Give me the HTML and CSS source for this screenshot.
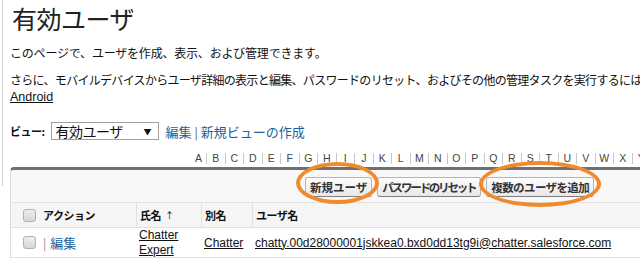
FILE: index.html
```html
<!DOCTYPE html>
<html lang="ja">
<head>
<meta charset="utf-8">
<link rel="stylesheet" href="styles.css">
</head>
<body>
<div class="page">
  <h1 class="title">有効ユーザ</h1>
  <p class="intro">このページで、ユーザを作成、表示、および管理できます。</p>
  <p class="intro2"><span class="clip">さらに、モバイルデバイスからユーザ詳細の表示と編集、パスワードのリセット、およびその他の管理タスクを実行するには</span><a class="plain" href="#">Android</a></p>
  <div class="view-row">
    <span class="view-label">ビュー:</span>
    <span class="select"><span class="sel-text">有効ユーザ</span><span class="sel-arrow">▼</span></span>
    <a class="link" href="#">編集</a><span class="bar">|</span><a class="link" href="#">新規ビューの作成</a>
  </div>
  <div class="alpha">
    <span>A</span><span>B</span><span>C</span><span>D</span><span>E</span><span>F</span><span>G</span><span>H</span><span>I</span><span>J</span><span>K</span><span>L</span><span>M</span><span>N</span><span>O</span><span>P</span><span>Q</span><span>R</span><span>S</span><span>T</span><span>U</span><span>V</span><span>W</span><span>X</span><span>Y</span>
  </div>
  <div class="panel">
    <div class="btn-row">
      <span class="btn-wrap">
        <button class="btn">新規ユーザ</button>
        <span class="ring ring1"></span>
      </span>
      <button class="btn narrow">パスワードのリセット</button>
      <span class="btn-wrap">
        <button class="btn mid">複数のユーザを追加</button>
        <span class="ring ring2"></span>
      </span>
    </div>
    <div class="row head">
      <div class="c c1"><span class="cb"></span>アクション</div>
      <div class="c c2">氏名 <span class="sort">↑</span></div>
      <div class="c c3">別名</div>
      <div class="c c4">ユーザ名</div>
    </div>
    <div class="row data">
      <div class="c c1"><span class="cb"></span><span class="sep">|</span><a class="link edit" href="#">編集</a></div>
      <div class="c c2"><a class="plain two" href="#">Chatter<br>Expert</a></div>
      <div class="c c3"><a class="plain" href="#">Chatter</a></div>
      <div class="c c4"><a class="plain" href="#">chatty.00d28000001jskkea0.bxd0dd13tg9i@chatter.salesforce.com</a></div>
    </div>
  </div>
</div>
</body>
</html>
```
FILE: styles.css
```css
html, body {
  margin: 0;
  padding: 0;
  background: #fff;
  overflow: hidden;
}
body {
  width: 640px;
  height: 263px;
  font-family: "Noto Sans CJK JP", "Liberation Sans", sans-serif;
  color: #111;
  font-size: 12px;
  position: relative;
}
body::before {
  content: "";
  position: absolute;
  left: 2px;
  top: 0;
  width: 1px;
  height: 186px;
  background: #d4d4d4;
}
.page {
  padding-left: 10px;
  white-space: nowrap;
}
.title {
  margin: 0;
  padding-top: 2px;
  font-size: 25px;
  font-weight: normal;
  line-height: 32px;
  color: #222;
  padding-left: 2px;
  letter-spacing: -0.5px;
}
.intro {
  margin: 11px 0 0;
  line-height: 16px;
  letter-spacing: -0.2px;
}
.intro2 {
  margin: 11px 0 0;
  line-height: 16px;
  letter-spacing: -0.7px;
}
.clip {
  display: block;
}
.plain {
  color: #111;
  text-decoration: underline;
  font-family: "Liberation Sans", sans-serif;
  letter-spacing: 0;
}
.intro2 .plain { font-size: 12.5px; }
.view-row {
  margin-top: 17px;
  display: flex;
  align-items: center;
  height: 18px;
}
.view-label {
  font-weight: bold;
  font-size: 11px;
  letter-spacing: -0.5px;
  margin-right: 6px;
}
.select {
  display: inline-flex;
  align-items: center;
  justify-content: space-between;
  height: 16px;
  border: 1px solid #a0a0a0;
  padding: 0 6px 0 4px;
  width: 96px;
  font-size: 14px;
  margin-right: 7px;
}
.sel-text { letter-spacing: -0.5px; line-height: 16px; }
.sel-arrow { font-size: 8px; }
.link {
  color: #1a5f9e;
  text-decoration: none;
  font-size: 13px;
}
.bar {
  color: #555;
  margin: 0 3px;
  font-size: 12px;
}
.alpha {
  margin-top: 11px;
  padding-left: 185px;
  display: flex;
  height: 14px;
  align-items: center;
  font-size: 10.5px;
  color: #444;
  font-family: "Liberation Sans", sans-serif;
}
.alpha span {
  width: 17.5px;
  text-align: center;
  border-right: 1px solid #c8c8c8;
  line-height: 11px;
  flex: none;
}
.alpha span:first-child { width: 11px; text-align: left; }
.alpha span:last-child { border-right: none; }
.panel {
  margin-top: 2px;
  border-top: 3px solid #6f6f6f;
  border-left: 1px solid #dcdcdc;
  border-radius: 4px 0 0 0;
  background: #f8f8f8;
  width: 650px;
}
.btn-row {
  display: flex;
  padding: 7px 0 5px 294px;
  gap: 5px;
}
.btn-wrap {
  position: relative;
  display: inline-flex;
}
.btn {
  font-family: "Noto Sans CJK JP", sans-serif;
  font-weight: bold;
  font-size: 11.5px;
  letter-spacing: 0;
  color: #333;
  height: 20px;
  padding: 0 4px;
  border: 1px solid #b5b5b5;
  border-bottom-color: #7f7f7f;
  border-radius: 3px;
  background: linear-gradient(#fdfdfd, #e8e8e8);
  line-height: 18px;
}
.btn.narrow { letter-spacing: -2.2px; padding: 0 5px 0 4px; }
.btn.mid { letter-spacing: -0.6px; }
.ring {
  position: absolute;
  box-sizing: border-box;
  border: 4px solid #f08a2c;
  border-radius: 50%;
  pointer-events: none;
}
.ring1 {
  left: -9px;
  top: -15px;
  width: 83px;
  height: 42px;
}
.ring2 {
  left: -7px;
  top: -16px;
  width: 122px;
  height: 46px;
}
.row {
  display: flex;
  align-items: center;
}
.head {
  height: 24px;
  border-top: 1px solid #e0e0e0;
  border-bottom: 1px solid #e0e0e0;
  font-weight: bold;
  font-size: 11px;
  letter-spacing: -0.5px;
  background: #f5f5f5;
}
.data {
  height: 29px;
  background: #fff;
  border-bottom: 1px solid #e3e3e3;
}
.c {
  height: 100%;
  display: flex;
  align-items: center;
  box-sizing: border-box;
  padding-left: 3px;
}
.head .c + .c { border-left: 1px solid #e0e0e0; }
.c1 { width: 125px; padding-left: 12px; }
.c2 { width: 65px; }
.c3 { width: 51px; }
.c4 { flex: 1; }
.cb {
  display: inline-block;
  width: 11px;
  height: 11px;
  border: 1px solid #b0b0b0;
  border-radius: 3px;
  background: linear-gradient(#eee, #d6d6d6);
  margin-right: 7px;
}
.sep { color: #888; margin-right: 4px; }
.edit { font-size: 13px; }
.sort { font-size: 9px; font-weight: normal; margin-left: 4px; }
.data .plain { font-size: 12px; }
.two { line-height: 15px; }
```
